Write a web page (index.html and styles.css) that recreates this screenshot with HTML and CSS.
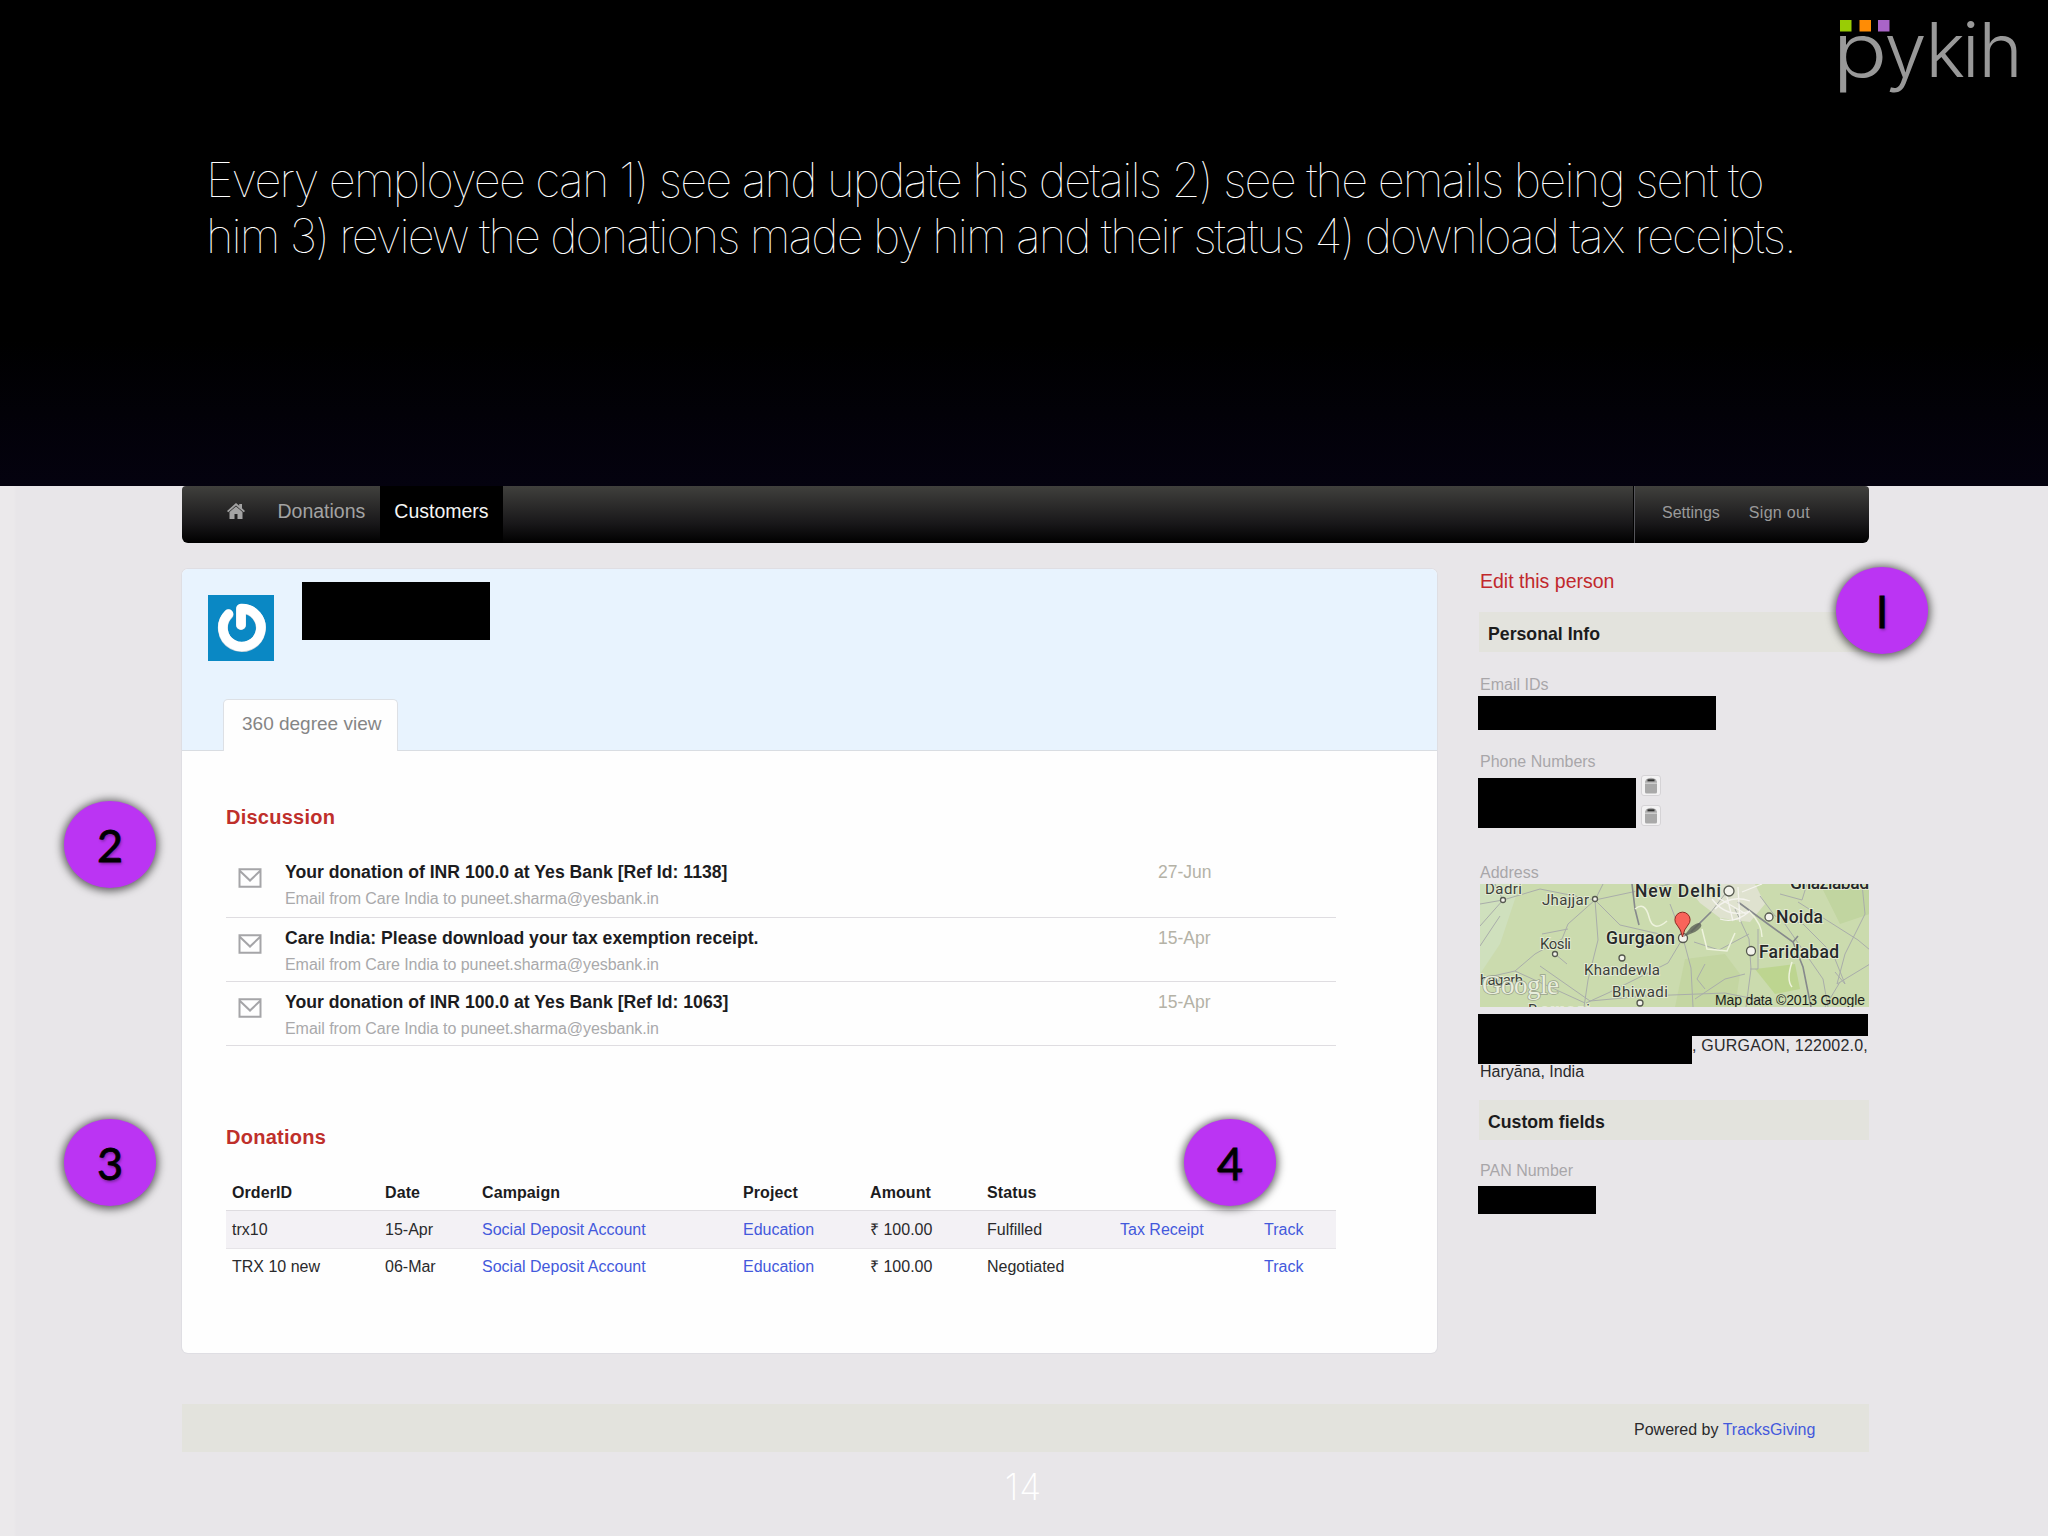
FILE: index.html
```html
<!DOCTYPE html>
<html lang="en">
<head>
  <meta charset="UTF-8">
  <title>Employee view</title>
  <link rel="stylesheet" href="styles.css">
</head>
<body>
  <header class="slide-head">
    <div class="logo">
      <svg width="190" height="90" viewBox="1835 10 190 90" role="img" aria-label="pykih">
        <text class="logo-text" x="1832.500" y="76.500" textLength="55" lengthAdjust="spacingAndGlyphs">p</text>
        <text class="logo-text" x="1884.500" y="76.500" textLength="42" lengthAdjust="spacingAndGlyphs">y</text>
        <text class="logo-text" x="1925.5 1962 1978.5" y="76.500">kih</text>
        <rect x="1840" y="20" width="11.5" height="11.5" fill="#99cc05"/>
        <rect x="1859.5" y="20" width="11.5" height="11.5" fill="#ff8c05"/>
        <rect x="1878" y="20" width="11.5" height="11.5" fill="#a964c8"/>
      </svg>
    </div>
    <h1 class="slide-title">
      <span class="line line-1">Every employee can 1) see and update his details 2) see the emails being sent to</span>
      <span class="line line-2">him 3) review the donations made by him and their status 4) download tax receipts.</span>
    </h1>
  </header>

  <main class="screen">
    <nav class="navbar">
      <a class="nav-home" href="#" aria-label="Home">
        <svg width="18" height="16" viewBox="0 0 18 16"><path d="M9 0 0 8l1.200 1.300L9 2.600l7.800 6.700L18 8l-3-2.700V1h-2.800v1.800zM9 3.400 2.500 9v7h5v-5h3v5h5V9z" fill="#a3a3a3"/></svg>
      </a>
      <a class="nav-link" href="#">Donations</a>
      <a class="nav-link active" href="#">Customers</a>
      <div class="nav-right">
        <a class="small-link" href="#">Settings</a>
        <a class="small-link sign-out" href="#">Sign out</a>
      </div>
    </nav>

    <div class="columns">
      <section class="card">
        <div class="card-head">
          <div class="profile">
            <svg class="avatar" width="66" height="66" viewBox="0 0 66 66">
              <rect width="66" height="66" fill="#0a88c4"/>
              <path d="M20.500 19.500A19 19 0 1 0 33 14V30" fill="none" stroke="#c9d3da" stroke-width="10" stroke-linecap="round" stroke-linejoin="round"/>
              <path d="M20.500 19A19 19 0 1 0 33 13.500V30" fill="none" stroke="#fff" stroke-width="9.500" stroke-linecap="round" stroke-linejoin="round"/>
            </svg>
            <div class="redacted name"></div>
          </div>
          <div class="tabs"><a class="tab" href="#">360 degree view</a></div>
        </div>

        <div class="card-body">
          <h2>Discussion</h2>
          <ul class="mails">
            <li class="mail first">
              <svg class="mail-icon" width="24" height="20" viewBox="0 0 24 20"><path d="M1.500 1.200h21v17.600h-21zM2 3l10 9.500L22 3"/></svg>
              <div class="mail-text"><strong class="mail-title">Your donation of INR 100.0 at Yes Bank [Ref Id: 1138]</strong><span class="mail-sub">Email from Care India to puneet.sharma@yesbank.in</span></div>
              <span class="mail-date">27-Jun</span>
            </li>
            <li class="mail">
              <svg class="mail-icon" width="24" height="20" viewBox="0 0 24 20"><path d="M1.500 1.200h21v17.600h-21zM2 3l10 9.500L22 3"/></svg>
              <div class="mail-text"><strong class="mail-title">Care India: Please download your tax exemption receipt.</strong><span class="mail-sub">Email from Care India to puneet.sharma@yesbank.in</span></div>
              <span class="mail-date">15-Apr</span>
            </li>
            <li class="mail">
              <svg class="mail-icon" width="24" height="20" viewBox="0 0 24 20"><path d="M1.500 1.200h21v17.600h-21zM2 3l10 9.500L22 3"/></svg>
              <div class="mail-text"><strong class="mail-title">Your donation of INR 100.0 at Yes Bank [Ref Id: 1063]</strong><span class="mail-sub">Email from Care India to puneet.sharma@yesbank.in</span></div>
              <span class="mail-date">15-Apr</span>
            </li>
          </ul>

          <h2>Donations</h2>
          <table class="donations">
            <colgroup><col class="c-order"><col class="c-date"><col class="c-campaign"><col class="c-project"><col class="c-amount"><col class="c-status"><col class="c-receipt"><col class="c-track"></colgroup>
            <thead>
              <tr><th>OrderID</th><th>Date</th><th>Campaign</th><th>Project</th><th>Amount</th><th>Status</th><th></th><th></th></tr>
            </thead>
            <tbody>
              <tr class="odd"><td>trx10</td><td>15-Apr</td><td><a href="#">Social Deposit Account</a></td><td><a href="#">Education</a></td><td>₹ 100.00</td><td>Fulfilled</td><td><a href="#">Tax Receipt</a></td><td><a href="#">Track</a></td></tr>
              <tr><td>TRX 10 new</td><td>06-Mar</td><td><a href="#">Social Deposit Account</a></td><td><a href="#">Education</a></td><td>₹ 100.00</td><td>Negotiated</td><td></td><td><a href="#">Track</a></td></tr>
            </tbody>
          </table>
        </div>
      </section>

      <aside class="sidebar">
        <a class="edit" href="#">Edit this person</a>
        <h3 class="bar">Personal Info</h3>
        <p class="label">Email IDs</p>
        <div class="redacted email"></div>
        <p class="label phone-label">Phone Numbers</p>
        <div class="phones">
          <div class="redacted phone"></div>
          <div class="trash-list">
            <span class="trash"><svg width="14" height="17" viewBox="0 0 14 17"><path d="M2 2.500Q7-1 12 2.500L13 5v10q0 1.500-1.500 1.500h-9Q1 16.500 1 15V5z" fill="#a9a9a9"/><path d="M3.500 3.300h7" stroke="#333" stroke-width="2"/><path d="M1 6.200h12" stroke="#ddd"/></svg></span>
            <span class="trash"><svg width="14" height="17" viewBox="0 0 14 17"><path d="M2 2.500Q7-1 12 2.500L13 5v10q0 1.500-1.500 1.500h-9Q1 16.500 1 15V5z" fill="#a9a9a9"/><path d="M3.500 3.300h7" stroke="#333" stroke-width="2"/><path d="M1 6.200h12" stroke="#ddd"/></svg></span>
          </div>
        </div>
        <p class="label address-label">Address</p>
        <svg class="map" width="389" height="123" viewBox="0 0 389 123">
          <rect width="389" height="123" fill="#cbdbae"/>
          <g class="terrain">
            <path d="M0 0h40L20 60 0 90z" fill="#cfe0bd"/>
            <path d="M205 0h70l10 20-15 18-30-4-20-15z" fill="#dfe2cf"/>
            <path d="M205 75l40-5 15 20-5 33h-60z" fill="#c4d6a2"/>
            <path d="M275 85l40-5 5 25-25 5z" fill="#bdd590"/>
            <path d="M340 0h50v30l-30 10z" fill="#c1d5a0"/>
          </g>
          <g class="roads">
            <path d="M0 20 23 16 60 5 115 16 190 0M23 16 0 42M23 16 15 0M115 16 88 40 82 55 55 70 35 87 0 95M115 16l3 40-10 40-4 27M115 16l8-16M115 16l25 25 35 8 20 4M60 82l50 35 55-5 80-3 40 8M35 87l70 32M203 54l-15 25-60 30-22 10M203 54l8 30 2 39M203 54l28-26 14-18M255 25l14 30 2 30-5 38M190 20l13 34M160 62l30-6M269 50l-30 16-25-8M215 115l30-20 20-5M225 80l-8 15 8 10M280 12l15 20 28 8 30 30 12 30-10-12M300 10l22 6 5-16M318 18l60 38 12 10M382 0l3 30-20 40-8 30 33-20M360 98l-15 25M270 85h8v-40M298 30l45 65 5 28M0 62l20-30M75 70l12 10M62 50l26-5"/>
            <path class="major" d="M258 18l30 22 25 18 10 25 8 40M152 0l3 25 4 16M231 28l-20 20M313 58l5-6"/>
            <path class="city" d="M235 25q15-15 35-8M232 15q15 20 38 12M240 35q15 5 30-8M245 5l8 32M258 3l2 35M228 8l38 22M262 8l20-8"/>
            <path class="ridge" d="M155 25q10-8 14 8t18 4M222 45l5 20 20 2 8-18M270 28q12 12 12 25M312 78q-6 18 0 25"/>
          </g>
          <g class="towns">
            <circle cx="23" cy="16" r="2.500"/><circle cx="115" cy="15" r="2.500"/><circle cx="75" cy="70" r="2.500"/><circle cx="142" cy="74" r="3"/><circle cx="160" cy="119" r="3"/><circle cx="249" cy="7" r="5"/><circle cx="289" cy="33" r="4"/><circle cx="271" cy="67" r="4.500"/><circle cx="203" cy="54" r="4.500"/>
          </g>
          <g class="map-small">
            <text x="5" y="9.500" textLength="37">Dadri</text>
            <text x="62" y="21" textLength="47">Jhajjar</text>
            <text x="60" y="65" textLength="31">Kosli</text>
            <text x="104" y="91" textLength="76">Khandewla</text>
            <text x="132" y="113" textLength="56">Bhiwadi</text>
            <text x="0" y="101" textLength="43">hagarh</text>
            <text x="48" y="131" textLength="62">Rewari</text>
          </g>
          <g class="map-large">
            <text x="155" y="13" textLength="86">New Delhi</text>
            <text x="126" y="60" textLength="69">Gurgaon</text>
            <text x="296" y="39" textLength="47">Noida</text>
            <text x="279" y="74" textLength="80">Faridabad</text>
            <text x="310" y="5" textLength="79">Ghaziabad</text>
          </g>
          <path d="M203 53l8-10q8-6 10-3t-6 8z" fill="#5c6256" opacity=".8"/>
          <path d="M202.500 53Q201 45 197 41a7.600 7.600 0 1 1 11 0Q204 45 202.500 53z" fill="#f9645a" stroke="#8c2a22"/>
          <text class="google" x="2" y="110" textLength="77">Google</text>
          <text class="map-credit" x="235" y="120.500" textLength="150">Map data ©2013 Google</text>
        </svg>
        <div class="redacted addr-1"></div>
        <div class="addr-row"><div class="redacted addr-2"></div><span class="addr-city">, GURGAON, 122002.0,</span></div>
        <p class="addr-last">Haryāna, India</p>
        <h3 class="bar custom">Custom fields</h3>
        <p class="label pan-label">PAN Number</p>
        <div class="redacted pan"></div>
      </aside>
    </div>

    <footer class="footer"><span>Powered by <a href="#">TracksGiving</a></span></footer>
    <div class="page-no">14</div>
  </main>

  <span class="badge badge-1">I</span>
  <span class="badge badge-2">2</span>
  <span class="badge badge-3">3</span>
  <span class="badge badge-4">4</span>
</body>
</html>
```
FILE: styles.css
```css
* { box-sizing: border-box; }
body {
  margin: 0;
  width: 2048px;
  height: 1536px;
  position: relative;
  overflow: hidden;
  font-family: "Liberation Sans", Arial, sans-serif;
  font-size: 16px;
  line-height: 20px;
  color: #2a2a2c;
  background: #e8e6e9;
}
a { color: #4359dc; text-decoration: none; }
h1, h2, h3, p, ul { margin: 0; padding: 0; }

/* slide header */
.slide-head {
  height: 486px;
  background: linear-gradient(#000 0, #000 340px, #04020f 486px);
}
.logo {
  display: flex;
  justify-content: flex-end;
  height: 100px;
  padding: 10px 23px 0 0;
}
.logo svg { overflow: visible; }
.logo-text {
  font-family: Inter, sans-serif;
  font-weight: 300;
  font-size: 75px;
  fill: #999;
}
.slide-title {
  padding: 52px 0 0 206px;
  font-family: Inter, "Liberation Sans", sans-serif;
  font-weight: 100;
  font-size: 47px;
  line-height: 56px;
  color: #fff;
}
.line { display: block; white-space: nowrap; }
.line-1 { letter-spacing: -1.830px; }
.line-2 { letter-spacing: -1.950px; }

/* app screen */
.screen {
  height: 1050px;
  padding: 0 179px 0 182px;
  background: linear-gradient(90deg, #ebe9eb 14px, transparent 16px);
}
.navbar {
  display: flex;
  height: 57px;
  border-radius: 4px 4px 6px 6px;
  background: linear-gradient(#40403d, #19181a 65%, #000);
  overflow: hidden;
}
.nav-home { padding: 17px 18px 0 45px; }
.nav-home svg { display: block; }
.nav-link {
  padding: 0 14.500px;
  font-size: 19.500px;
  line-height: 51px;
  color: #a3a3a3;
}
.nav-link.active { background: #000; color: #f5f5f5; }
.nav-right {
  display: flex;
  width: 236px;
  margin-left: auto;
  padding-left: 28px;
  border-left: 1px solid #000;
  box-shadow: inset 1px 0 #55555a;
}
.small-link { line-height: 53px; color: #9a9a9a; }
.sign-out { margin-left: 29px; letter-spacing: .300px; }

.columns { display: flex; height: 861px; padding-top: 26px; }
.card {
  width: 1255px;
  height: 784px;
  border-radius: 6px;
  background: #fefefe;
  box-shadow: 0 0 0 1px #dfdee3;
  overflow: hidden;
}
.card-head {
  display: flex;
  flex-direction: column;
  height: 182px;
  border-bottom: 1px solid #d9dde2;
  background: #e8f3fe;
}
.profile { display: flex; padding: 13px 26px 0; }
.avatar { margin-top: 13px; }
.redacted { background: #000; }
.name { width: 188px; height: 58px; margin-left: 28px; }
.tabs { margin-top: auto; padding-left: 41px; }
.tab {
  display: block;
  width: 175px;
  height: 52px;
  margin-bottom: -1px;
  padding-left: 18px;
  border: 1px solid #dde0e5;
  border-bottom: 0;
  border-radius: 5px 5px 0 0;
  background: #fefefe;
  font-size: 19px;
  line-height: 48px;
  color: #858585;
}
.card-body { padding: 54px 101px 0 44px; }
h2 { font-size: 20px; line-height: 24px; letter-spacing: .250px; color: #bf2f2b; }
.mails { margin: 23px 0 79px; list-style: none; }
.mail {
  display: flex;
  height: 64px;
  padding-left: 12px;
  border-bottom: 1px solid #dfdde1;
}
.mail.first { height: 66px; }
.mail-icon { margin-top: 16px; fill: none; stroke: #a5a5a8; stroke-width: 2; }
.mail-text { width: 896px; padding: 10px 0 0 23px; white-space: nowrap; }
.mail-title { display: block; font-size: 17.650px; color: #1c1c1e; }
.mail-sub { display: block; margin-top: 7px; letter-spacing: -.050px; color: #a9a9ab; }
.mail-date { padding-top: 10px; font-size: 17.500px; color: #b4b2a6; }

.donations {
  width: 1110px;
  margin-top: 24px;
  border-collapse: collapse;
  table-layout: fixed;
}
.donations th, .donations td { height: 37px; padding: 1px 0 0 6px; text-align: left; white-space: nowrap; }
.donations th { padding-top: 4px; letter-spacing: .100px; color: #1c1c1e; }
.donations .odd td { height: 38px; padding-top: 2px; background: #f3f1f5; border-top: 1px solid #dedce0; border-bottom: 1px solid #e6e4e8; }
.c-order { width: 153px; }
.c-date { width: 97px; }
.c-campaign { width: 261px; }
.c-project { width: 127px; }
.c-amount { width: 117px; }
.c-status { width: 133px; }
.c-receipt { width: 144px; }
.c-track { width: 78px; }

/* sidebar */
.sidebar { width: 389px; margin-left: 43px; }
.edit { display: block; font-size: 19.500px; line-height: 24px; color: #c1282c; }
.bar {
  height: 40px;
  margin: 19px 0 0 -1px;
  padding-left: 9px;
  background: #e3e3dd;
  font-size: 17.700px;
  line-height: 44px;
  color: #1c1c1c;
}
.label { margin-top: 23px; color: #a8a6a9; }
.sidebar .redacted { margin-left: -2px; }
.email { width: 238px; height: 34px; margin-top: 1px; }
.phone-label { margin-top: 22px; }
.phones { display: flex; margin-top: 3px; }
.phone { width: 158px; height: 50px; margin-top: 3px; }
.trash-list { padding-left: 5px; }
.trash {
  display: flex;
  justify-content: center;
  align-items: center;
  width: 20px;
  height: 21px;
  margin-bottom: 9px;
  border: 1px solid #d5d3d6;
  border-radius: 3px;
  background: #f3f2f3;
}
.address-label { margin-top: 28px; }
.map { display: block; margin-top: 1px; font-family: Roboto, sans-serif; }
.roads { fill: none; stroke: #a9adaa; stroke-width: 1; }
.major { stroke: #86898c; stroke-width: 1.600; }
.city { stroke: #f4f3ee; stroke-width: 1.300; }
.ridge { stroke: #eef3dd; stroke-width: 1.500; }
.towns { fill: #f3f3ec; stroke: #55584f; stroke-width: 1.300; }
.map-small, .map-large { stroke: #e3ead3; stroke-width: 2px; paint-order: stroke; }
.map-small { font-size: 15px; fill: #3c3f3a; }
.map-large { font-size: 17.500px; font-weight: 500; fill: #26282a; }
.map-credit { font-family: "Liberation Sans", Arial, sans-serif; font-size: 14px; fill: #1c1e1c; }
.google { font-family: "Liberation Serif", serif; font-size: 27px; fill: #e9eedd; stroke: #9aa38d; stroke-width: 1.500px; paint-order: stroke; }
.addr-1 { width: 390px; height: 22px; margin-top: 7px; }
.addr-row { display: flex; }
.addr-2 { width: 214px; height: 28px; }
.addr-city { line-height: 19px; letter-spacing: .220px; white-space: nowrap; }
.addr-last { margin-top: -2px; }
.custom { margin-top: 18px; }
.pan-label { margin-top: 21px; }
.pan { width: 118px; height: 28px; margin-top: 5px; }

.footer {
  height: 48px;
  padding-left: 1452px;
  background: #e3e3dd;
  line-height: 51px;
}
.page-no {
  padding-right: 4px;
  margin-top: 15px;
  font-family: Inter, "Liberation Sans", sans-serif;
  font-weight: 200;
  font-size: 36px;
  line-height: 40px;
  letter-spacing: 1px;
  text-align: center;
  color: #fff;
}

/* numbered callouts lying over the screen */
.badge {
  position: absolute;
  width: 92px;
  height: 87px;
  border-radius: 50%;
  background: #bb34f3;
  box-shadow: 0 1px 9px 2px rgba(0, 0, 0, .6);
  font-family: Lato, sans-serif;
  font-weight: 400;
  font-size: 45px;
  line-height: 88px;
  text-align: center;
  color: #000;
  -webkit-text-stroke: .800px #000;
  text-shadow: 1px 2px 3px rgba(0, 0, 0, .35);
}
.badge-1 { left: 1836px; top: 567px; }
.badge-2 { left: 64px; top: 801px; }
.badge-3 { left: 64px; top: 1119px; }
.badge-4 { left: 1184px; top: 1119px; }
```
